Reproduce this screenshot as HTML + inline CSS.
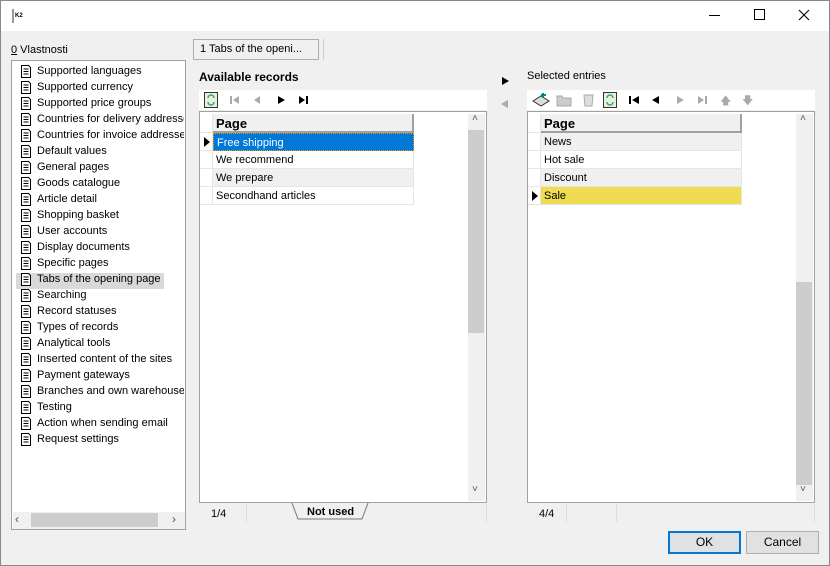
<!DOCTYPE html>
<html><head><meta charset="utf-8"><style>
*{box-sizing:border-box;margin:0;padding:0}
body{width:830px;height:566px;overflow:hidden;background:#f0f0f0;font-family:"Liberation Sans",sans-serif;font-size:11px;color:#000;position:relative}
.a{position:absolute}
.win{left:0;top:0;width:830px;height:566px;border:1px solid #888}
.title{left:1px;top:1px;width:828px;height:30px;background:#fff}
.list{left:11px;top:60px;width:175px;height:470px;background:#fff;border:1px solid #a0a0a0}
.it{position:absolute;left:6px;height:16px;line-height:16px;white-space:nowrap;width:166px;overflow:hidden}
.it svg{position:absolute;left:2px;top:2px}
.it span{position:absolute;left:19px}
.box{background:#fff;border:1px solid #a0a0a0}
.row{position:absolute;height:18px;line-height:18px;padding-left:3px;border-bottom:1px solid #e6e6e6;border-right:1px solid #e6e6e6}
.ind{position:absolute;width:13px;height:18px;border-bottom:1px solid #e6e6e6;border-right:1px solid #e6e6e6}
.hdr{position:absolute;height:19px;line-height:19px;font-weight:bold;font-size:13px;padding-left:3px;background:#f0f0f0;border-right:2px solid #a0a0a0;border-bottom:2px solid #a0a0a0}
.btn{position:absolute;height:23px;border:1px solid #adadad;background:#e1e1e1;text-align:center;line-height:21px;font-size:12px}
.tr{position:absolute;width:0;height:0;border-top:4px solid transparent;border-bottom:4px solid transparent}
.bar{position:absolute;width:2px;height:8px}
</style></head><body>
<div class="a win"></div>
<div class="a title"></div>
<div class="a" style="left:12px;top:9px;width:2px;height:14px;background:#999"></div>
<div class="a" style="left:15px;top:13px;font-size:6px;font-weight:bold">K2</div>
<div class="a" style="left:709px;top:15px;width:11px;height:1px;background:#000"></div>
<div class="a" style="left:754px;top:9px;width:11px;height:11px;border:1px solid #000"></div>
<svg class="a" style="left:798px;top:9px" width="12" height="12"><path d="M1 1L11 11M11 1L1 11" stroke="#000" stroke-width="1.1"/></svg>

<div class="a" style="left:11px;top:44px;font-size:11px"><u>0</u> Vlastnosti</div>
<div class="a" style="left:193px;top:39px;width:126px;height:21px;border:1px solid #adadad;background:#f0f0f0;line-height:19px;padding-left:6px">1 Tabs of the openi...</div>
<div class="a" style="left:323px;top:39px;width:1px;height:21px;background:#ccc"></div>

<div class="a list">
<div class="a" style="left:4px;top:212px;width:148px;height:16px;background:#d9d9d9"></div>
<div id="items"></div>
<div class="a" style="left:1px;top:451px;width:172px;height:17px;background:#f0f0f0"></div>
<div class="a" style="left:19px;top:452px;width:127px;height:14px;background:#cdcdcd"></div>
<div class="a" style="left:3px;top:451px;font-size:12px;color:#555">‹</div>
<div class="a" style="left:160px;top:451px;font-size:12px;color:#555">›</div>
</div>

<div class="a" style="left:199px;top:70px;font-weight:bold;font-size:12px">Available records</div>
<div class="a" style="left:199px;top:90px;width:288px;height:20px;background:#fff"></div>
<svg class="a" style="left:204px;top:92px" width="14" height="16"><rect x="0.5" y="0.5" width="13" height="15" fill="#e8f0e0" stroke="#333"/><path d="M4 6a3 3 0 0 1 6 0M10 10a3 3 0 0 1-6 0" stroke="#3a6" fill="none" stroke-width="1.5"/></svg>
<div class="bar" style="left:230px;top:96px;background:#aaa"></div><div class="tr" style="left:233px;top:96px;border-right:6px solid #aaa"></div>
<div class="tr" style="left:254px;top:96px;border-right:6px solid #aaa"></div>
<div class="tr" style="left:278px;top:96px;border-left:7px solid #000"></div>
<div class="tr" style="left:299px;top:96px;border-left:6px solid #000"></div><div class="bar" style="left:306px;top:96px;background:#000"></div>
<div class="a box" style="left:199px;top:111px;width:288px;height:392px">
<div class="ind" style="left:0;top:2px;height:19px"></div>
<div class="hdr" style="left:13px;top:2px;width:201px">Page</div>
<div class="ind" style="left:0;top:21px"><div style="position:absolute;left:4px;top:4px;border-left:6px solid #000;border-top:5px solid transparent;border-bottom:5px solid transparent"></div></div>
<div class="row" style="left:13px;top:21px;width:201px;background:#0078d7;color:#fff;border:1px dotted #f90">Free shipping</div>
<div class="ind" style="left:0;top:39px"></div><div class="row" style="left:13px;top:39px;width:201px;background:#fff">We recommend</div>
<div class="ind" style="left:0;top:57px"></div><div class="row" style="left:13px;top:57px;width:201px;background:#f0f0f0">We prepare</div>
<div class="ind" style="left:0;top:75px"></div><div class="row" style="left:13px;top:75px;width:201px;background:#fff">Secondhand articles</div>
<div class="a" style="left:268px;top:2px;width:17px;height:387px;background:#f0f0f0"></div>
<div class="a" style="left:268px;top:18px;width:16px;height:203px;background:#cdcdcd"></div>
<div class="a" style="left:272px;top:1px;font-size:10px;color:#555">˄</div>
<div class="a" style="left:272px;top:372px;font-size:10px;color:#555">˅</div>
</div>
<div class="a" style="left:211px;top:508px">1/4</div>
<div class="a" style="left:246px;top:504px;width:1px;height:18px;background:#ddd"></div>
<div class="a" style="left:486px;top:504px;width:1px;height:18px;background:#ddd"></div>
<svg class="a" style="left:290px;top:503px" width="80" height="20"><path d="M2 0L8 16H72L78 0" fill="#f0f0f0" stroke="#777"/></svg>
<div class="a" style="left:307px;top:506px;font-weight:bold">Not used</div>

<div class="tr" style="left:502px;top:77px;border-left:7px solid #000"></div>
<div class="tr" style="left:501px;top:100px;border-right:7px solid #aaa"></div>

<div class="a" style="left:527px;top:70px;font-size:11px">Selected entries</div>
<div class="a" style="left:527px;top:90px;width:288px;height:20px;background:#fff"></div>
<svg class="a" style="left:532px;top:92px" width="18" height="16"><path d="M1 9l8-5 8 5-8 5z" fill="#ddd" stroke="#333"/><path d="M11 6V1M9 3h5" stroke="#088" stroke-width="2"/></svg>
<svg class="a" style="left:556px;top:93px" width="17" height="14"><path d="M1 3h5l1 2h8v8H1z" fill="#ccc" stroke="#aaa"/></svg>
<svg class="a" style="left:582px;top:92px" width="13" height="15"><path d="M2 3h9l-1 11H3z" fill="#ddd" stroke="#aaa"/></svg>
<svg class="a" style="left:603px;top:92px" width="14" height="16"><rect x="0.5" y="0.5" width="13" height="15" fill="#e8f0e0" stroke="#333"/><path d="M4 6a3 3 0 0 1 6 0M10 10a3 3 0 0 1-6 0" stroke="#3a6" fill="none" stroke-width="1.5"/></svg>
<div class="bar" style="left:629px;top:96px;background:#000"></div><div class="tr" style="left:632px;top:96px;border-right:7px solid #000"></div>
<div class="tr" style="left:652px;top:96px;border-right:7px solid #000"></div>
<div class="tr" style="left:677px;top:96px;border-left:7px solid #aaa"></div>
<div class="tr" style="left:698px;top:96px;border-left:6px solid #aaa"></div><div class="bar" style="left:705px;top:96px;background:#aaa"></div>
<div class="a" style="left:720px;top:92px;font-size:11px;color:#aaa">🡅</div>
<div class="a" style="left:742px;top:92px;font-size:11px;color:#aaa">🡇</div>
<div class="a box" style="left:527px;top:111px;width:288px;height:392px">
<div class="ind" style="left:0;top:2px;height:19px"></div>
<div class="hdr" style="left:13px;top:2px;width:201px">Page</div>
<div class="ind" style="left:0;top:21px"></div><div class="row" style="left:13px;top:21px;width:201px;background:#f0f0f0">News</div>
<div class="ind" style="left:0;top:39px"></div><div class="row" style="left:13px;top:39px;width:201px;background:#fff">Hot sale</div>
<div class="ind" style="left:0;top:57px"></div><div class="row" style="left:13px;top:57px;width:201px;background:#f0f0f0">Discount</div>
<div class="ind" style="left:0;top:75px"><div style="position:absolute;left:4px;top:4px;border-left:6px solid #000;border-top:5px solid transparent;border-bottom:5px solid transparent"></div></div>
<div class="row" style="left:13px;top:75px;width:201px;background:#f0dc50">Sale</div>
<div class="a" style="left:268px;top:2px;width:17px;height:387px;background:#f0f0f0"></div>
<div class="a" style="left:268px;top:170px;width:16px;height:203px;background:#cdcdcd"></div>
<div class="a" style="left:272px;top:1px;font-size:10px;color:#555">˄</div>
<div class="a" style="left:272px;top:372px;font-size:10px;color:#555">˅</div>
</div>
<div class="a" style="left:539px;top:508px">4/4</div>
<div class="a" style="left:566px;top:504px;width:1px;height:18px;background:#ddd"></div>
<div class="a" style="left:616px;top:504px;width:1px;height:18px;background:#ddd"></div>
<div class="a" style="left:814px;top:504px;width:1px;height:18px;background:#ddd"></div>

<div class="btn" style="left:668px;top:531px;width:73px;border:2px solid #0078d7;line-height:19px">OK</div>
<div class="btn" style="left:746px;top:531px;width:73px">Cancel</div>

<script>
var t=["Supported languages","Supported currency","Supported price groups","Countries for delivery addresses","Countries for invoice addresses","Default values","General pages","Goods catalogue","Article detail","Shopping basket","User accounts","Display documents","Specific pages","Tabs of the opening page","Searching","Record statuses","Types of records","Analytical tools","Inserted content of the sites","Payment gateways","Branches and own warehouses","Testing","Action when sending email","Request settings"];
var h="";t.forEach(function(s,i){h+='<div class="it" style="top:'+(2+i*16)+'px"><svg width="12" height="13"><path d="M1.5 .5h7l2 2v10h-9z" fill="#fff" stroke="#000"/><path d="M3.5 4h5M3.5 6.5h5M3.5 9h5" stroke="#000"/></svg><span>'+s+'</span></div>';});
document.getElementById("items").innerHTML=h;
</script>
</body></html>
